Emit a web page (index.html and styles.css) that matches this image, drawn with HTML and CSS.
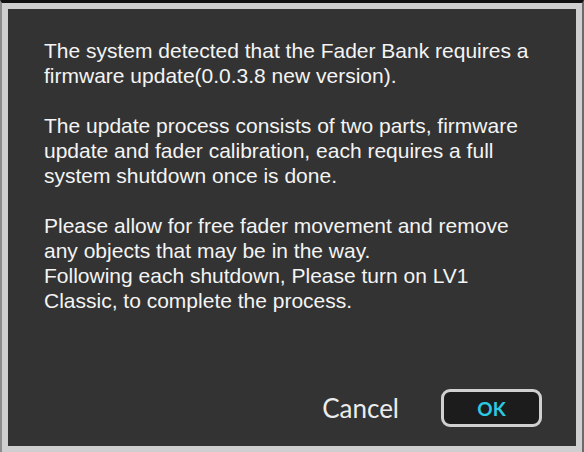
FILE: index.html
```html
<html>
    <head>
        <title>Firmware Update</title>
        <link rel="stylesheet" href="styles.css">
    </head>
    <body>
        <div id="frame">
            <div id="dialog">
                <div class="message">
                    <p>The system detected that the Fader Bank requires a<br>firmware update(0.0.3.8 new version).</p>
                    <p>The update process consists of two parts, firmware<br>update and fader calibration, each requires a full<br>system shutdown once is done.</p>
                    <p>Please allow for free fader movement and remove<br>any objects that may be in the way.<br>Following each shutdown, Please turn on LV1<br>Classic, to complete the process.</p>
                </div>
                <div class="buttons">
                    <div class="btn cancel">Cancel</div>
                    <div class="btn ok">OK</div>
                </div>
            </div>
        </div>
    </body>
</html>
```
FILE: styles.css
```css
body{
    margin: 0;
    background-color: #000;
    width: 584px;
    height: 452px;
    overflow: hidden;
}
#frame{
    box-sizing: border-box;
    width: 584px;
    height: 452px;
    border-top: 3px solid #111;
    border-left: 2px solid #8c8c8c;
    border-right: 2px solid #6a6a6a;
}
#dialog{
    box-sizing: border-box;
    height: 449px;
    border: 6px solid #cfcfcf;
    background-color: #333;
    display: flex;
    flex-direction: column;
}
.message{
    padding: 29px 0 0 36px;
    font-family: "Liberation Sans", Arial, sans-serif;
    font-size: 21px;
    line-height: 25px;
    color: #f4f4f4;
}
.message p{
    margin: 0 0 25px 0;
}
.buttons{
    margin-top: auto;
    display: flex;
    justify-content: flex-end;
    align-items: center;
    gap: 42px;
    padding: 0 34px 19px 0;
}
.btn{
    font-family: Lato, "Open Sans", sans-serif;
}
.cancel{
    font-size: 26px;
    color: #ececec;
}
.ok{
    box-sizing: border-box;
    width: 101px;
    height: 38px;
    border: 3px solid #d0d0d0;
    border-radius: 9px;
    background-color: #1c1c1c;
    color: #2cc9e2;
    font-size: 19px;
    font-weight: bold;
    display: flex;
    align-items: center;
    justify-content: center;
}
```
